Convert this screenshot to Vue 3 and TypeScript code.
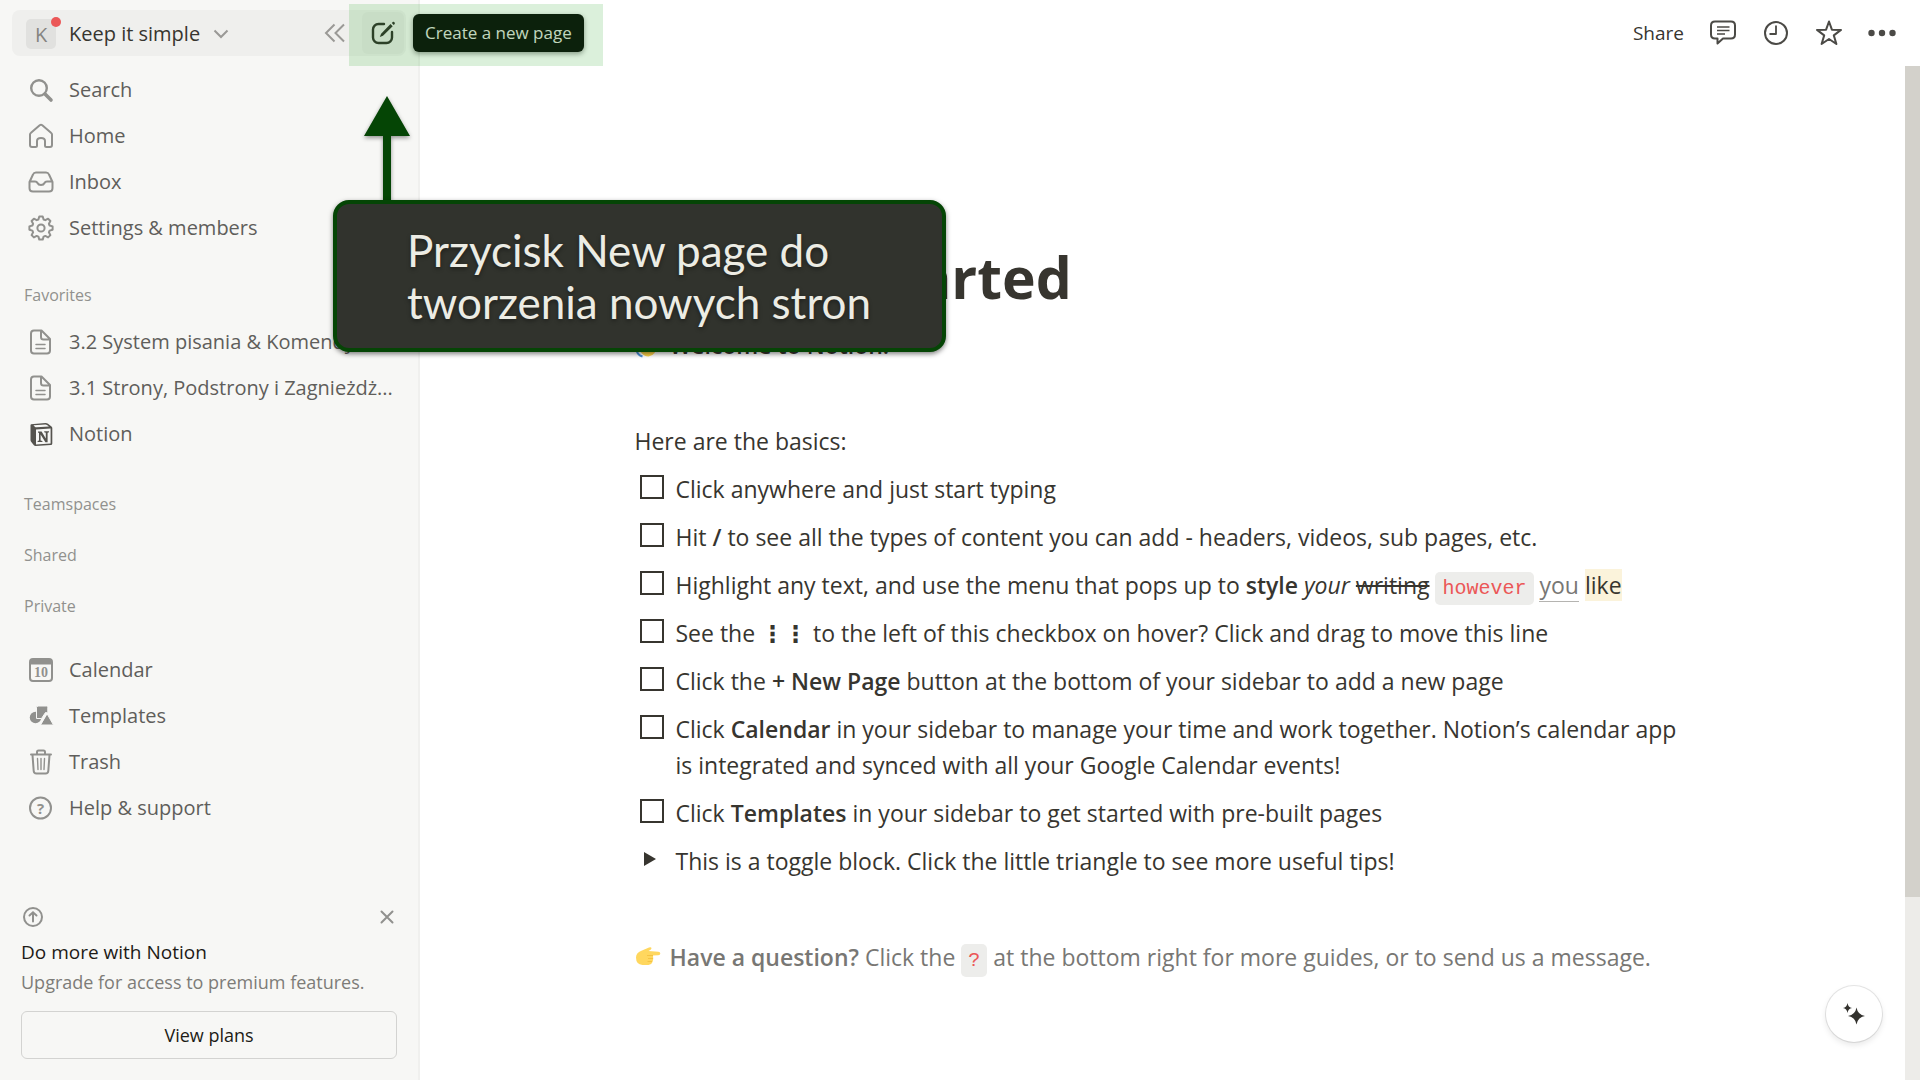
<script setup lang="ts">
import { ref } from 'vue'

interface NavItem {
  label: string
  icon: string
}

const mainNav: NavItem[] = [
  { label: 'Search', icon: 'search' },
  { label: 'Home', icon: 'home' },
  { label: 'Inbox', icon: 'inbox' },
  { label: 'Settings & members', icon: 'gear' },
]

const favorites: NavItem[] = [
  { label: '3.2 System pisania & Komendy', icon: 'page' },
  { label: '3.1 Strony, Podstrony i Zagnieżdż...', icon: 'page' },
  { label: 'Notion', icon: 'notion' },
]

const toolsNav: NavItem[] = [
  { label: 'Calendar', icon: 'calendar' },
  { label: 'Templates', icon: 'templates' },
  { label: 'Trash', icon: 'trash' },
  { label: 'Help & support', icon: 'help' },
]

const groups: { title: string; items: NavItem[]; kind: string }[] = [
  { title: '', items: mainNav, kind: 'primary' },
  { title: 'Favorites', items: favorites, kind: 'favorites' },
  { title: 'Teamspaces', items: [], kind: 'empty' },
  { title: 'Shared', items: [], kind: 'empty' },
  { title: 'Private', items: [], kind: 'empty' },
  { title: '', items: toolsNav, kind: 'tools' },
]

interface Span {
  text: string
  mark?: string
}

const todos: Span[][] = [
  [{ text: 'Click anywhere and just start typing' }],
  [
    { text: 'Hit ' },
    { text: '/', mark: 'bold' },
    { text: ' to see all the types of content you can add - headers, videos, sub pages, etc.' },
  ],
  [
    { text: 'Highlight any text, and use the menu that pops up to ' },
    { text: 'style', mark: 'bold' },
    { text: ' ' },
    { text: 'your', mark: 'italic' },
    { text: ' ' },
    { text: 'writing', mark: 'strike' },
    { text: ' ' },
    { text: 'however', mark: 'code' },
    { text: ' ' },
    { text: 'you', mark: 'link' },
    { text: ' ' },
    { text: 'like', mark: 'highlight' },
  ],
  [
    { text: 'See the ' },
    { text: '⋮⋮', mark: 'dots' },
    { text: ' to the left of this checkbox on hover? Click and drag to move this line' },
  ],
  [
    { text: 'Click the ' },
    { text: '+ New Page', mark: 'bold' },
    { text: ' button at the bottom of your sidebar to add a new page' },
  ],
  [
    { text: 'Click ' },
    { text: 'Calendar', mark: 'bold' },
    {
      text: ' in your sidebar to manage your time and work together. Notion’s calendar app is integrated and synced with all your Google Calendar events!',
    },
  ],
  [
    { text: 'Click ' },
    { text: 'Templates', mark: 'bold' },
    { text: ' in your sidebar to get started with pre-built pages' },
  ],
]

const done = ref<boolean[]>(todos.map(() => false))
</script>

<template>
  <div class="app">
    <aside class="sidebar">
      <header class="workspace">
        <button class="switcher" type="button">
          <span class="avatar">K<span class="dot"></span></span>
          <span>Keep it simple</span>
          <svg class="chevron" width="16" height="10" viewBox="0 0 16 10"><path d="M1.500 1.500 8 8l6.500-6.500" /></svg>
        </button>
        <button class="collapse" type="button" aria-label="Close sidebar">
          <svg width="22" height="20" viewBox="0 0 22 20"><path d="M10.500 1.500 2 10l8.500 8.500M20 1.500 11.500 10l8.500 8.500" /></svg>
        </button>
        <button class="compose" type="button" aria-label="New page">
          <svg width="26" height="26" viewBox="0 0 26 26">
            <path d="M14 4H8.500A5.500 5.500 0 0 0 3 9.500v8A5.500 5.500 0 0 0 8.500 23h8a5.500 5.500 0 0 0 5.500-5.500V12" fill="none" stroke="#35342f" stroke-width="2.400" stroke-linecap="round" />
            <path d="M20.500 4 22.700 6.200 13 15.800 9.800 17l1.300-3.300zM21.800 3l1-1c.900-.800 2.700.800 1.900 1.900l-1 1z" fill="#35342f" />
          </svg>
        </button>
      </header>

      <nav class="groups">
        <section v-for="(group, g) in groups" :key="g" :class="['group', group.kind]">
          <h2 v-if="group.title">{{ group.title }}</h2>
          <a v-for="item in group.items" :key="item.label" href="#" class="row">
            <svg class="icon" width="26" height="26" viewBox="0 0 26 26">
              <g v-if="item.icon === 'search'">
                <circle cx="11" cy="11" r="7.800" stroke-width="2.400" />
                <path d="m17 17 6 6" stroke-width="3.600" />
              </g>
              <g v-else-if="item.icon === 'home'">
                <path d="M2 11.600Q2 10.500 3 9.700L11.700 2.300q1.300-1 2.600 0L23 9.700q1 .800 1 1.900V22q0 2-2 2h-3.500q-1.500 0-1.500-1.500V18q0-3-4-3t-4 3v4.500Q9 24 7.500 24H4q-2 0-2-2z" />
              </g>
              <g v-else-if="item.icon === 'inbox'">
                <path d="M1.500 13 5 5.500Q5.800 3.500 8 3.500h10q2.200 0 3 2L24.500 13v6q0 3.500-3.500 3.500H5Q1.500 22.500 1.500 19zM2 12.500h5q1.800 0 2.500 1.500.900 2 3.500 2t3.500-2q.700-1.500 2.500-1.500h5" />
              </g>
              <g v-else-if="item.icon === 'gear'">
                <circle cx="13" cy="13" r="3.600" />
                <path d="M11.300 1.500h3.400l.900 3 1.700.700 2.800-1.500 2.300 2.300L20.900 8.800l.700 1.700 3 .900v3.300l-3 .900-.700 1.700 1.500 2.800-2.300 2.300-2.800-1.500-1.700.700-.900 3h-3.400l-.900-3-1.700-.700-2.800 1.500-2.300-2.300 1.500-2.800-.700-1.700-3-.900v-3.300l3-.900.700-1.700L3.600 6l2.300-2.300 2.800 1.500 1.700-.700z" />
              </g>
              <g v-else-if="item.icon === 'page'">
                <path d="M6 1.500h7.500L22 10v11.500q0 3-3 3H6q-3 0-3-3v-17q0-3 3-3zM13 2v6q0 2.500 2.500 2.500H22" />
                <path d="M8 15.500h9M8 19.500h9" stroke-width="1.500" />
              </g>
              <g v-else-if="item.icon === 'notion'">
                <path d="M3 3.200 17.500 2q1.500 0 2.500.800l3.500 2.700q.800.600.800 1.500v15.500q0 1.500-1.500 1.600L7.500 25q-1 0-1.600-.800L3.300 21q-.800-1-.800-2V4z" fill="#55534e" stroke="none" />
                <path d="m5.500 4.300 12-.800q.800 0 1.500.500l2 1.500L8.500 6.300q-1 0-1.700-.500zM8 8.500l14.600-.900v15L8 23.500z" fill="#f7f7f5" stroke="none" />
                <path d="M10 10.500h3.600l4.200 7v-5.700l-1.600-.500v-1h4.800v1l-1.400.500v9.400h-2.200l-4.800-7.800v6.200l1.800.500v1h-4.800v-1l1.400-.500v-7.700L10 11.500z" fill="#55534e" stroke="none" />
              </g>
              <g v-else-if="item.icon === 'calendar'">
                <rect x="2" y="2" width="22" height="22" rx="3" />
                <path d="M2 2h22v5.500H2z" class="solid" />
                <text x="13" y="20" text-anchor="middle" class="date">10</text>
              </g>
              <g v-else-if="item.icon === 'templates'" class="solid">
                <circle cx="7.500" cy="14.500" r="5.700" />
                <path d="M9.500 3h9q1.300 0 1.300 1.300v5.600L17.500 9.500l-4 6h-5V4.300Q8.500 3 9.500 3z" stroke="#f7f7f5" stroke-width="1" />
                <path d="M19.200 11 25.500 22H12.800z" stroke="#f7f7f5" stroke-width="1" />
              </g>
              <g v-else-if="item.icon === 'trash'">
                <path d="M3 5.500h20M9 5V3q0-1.500 1.500-1.500h5Q17 1.500 17 3v2M4.500 6l1.200 16q.200 2.500 2.700 2.500h9.200q2.500 0 2.700-2.500L21.500 6" />
                <path d="m9.500 9.500.500 11M13 9.500v11M16.500 9.500l-.500 11" stroke-width="1.400" />
              </g>
              <g v-else>
                <circle cx="12.500" cy="13" r="10.500" />
                <text x="12.500" y="18.500" text-anchor="middle" class="question">?</text>
              </g>
            </svg>
            <span class="label">{{ item.label }}</span>
          </a>
        </section>
      </nav>

      <section class="upgrade">
        <div class="upgrade-top">
          <svg width="22" height="22" viewBox="0 0 22 22"><circle cx="11" cy="11" r="9" /><path d="M11 15.500v-9M7.500 9.500 11 6.300l3.500 3.200" /></svg>
          <button class="dismiss" type="button" aria-label="Dismiss">
            <svg width="14" height="14" viewBox="0 0 14 14"><path d="m1.500 1.500 11 11m0-11-11 11" /></svg>
          </button>
        </div>
        <h3>Do more with Notion</h3>
        <p>Upgrade for access to premium features.</p>
        <button class="plans" type="button">View plans</button>
      </section>
    </aside>

    <main class="main">
      <header class="topbar">
        <button class="share" type="button">Share</button>
        <button type="button" aria-label="Comments">
          <svg width="28" height="28" viewBox="0 0 28 28"><path d="M6 2.500h16q4 0 4 4v9q0 4-4 4h-8l-5.500 5v-5H6q-4 0-4-4v-9q0-4 4-4z" /><path d="M8 8h12.500M8 11.500h12.500M8 15h8" stroke-width="1.600" /></svg>
        </button>
        <button type="button" aria-label="Updates">
          <svg width="28" height="28" viewBox="0 0 28 28"><circle cx="14" cy="14" r="11" /><path d="M14 6.500V15H7.500" stroke-width="1.800" /></svg>
        </button>
        <button type="button" aria-label="Favorite">
          <svg width="28" height="28" viewBox="0 0 28 28"><path d="m14 2.500 2.900 8.200 9.100.200-7.200 5.500 2.600 8.600-7.400-5-7.400 5 2.600-8.600L2 10.900l9.100-.200z" /></svg>
        </button>
        <button type="button" aria-label="More">
          <svg width="28" height="28" viewBox="0 0 28 28"><g class="more"><circle cx="3.500" cy="14" r="3.200" /><circle cx="14" cy="14" r="3.200" /><circle cx="24.500" cy="14" r="3.200" /></g></svg>
        </button>
      </header>

      <div class="scroller">
        <article class="page">
          <h1>Getting Started</h1>
          <p class="welcome">
            <svg class="emoji" width="26" height="26" viewBox="0 0 26 26">
              <path d="M6 4q2-2 4 1l4 5-1-6q0-2 2-2t2.500 2l3 9q1 5-1 8t-6 3.500q-4 0-6.500-3L2.500 16q-1-2 1-2.500L2 10q0-2 2-2Q4 5 6 4z" fill="#ffd54a" />
              <path d="M1.500 18q1 5 6 6.500M20 2q4 1 4.500 5" fill="none" stroke="#4a90d9" stroke-width="2" />
            </svg>
            <strong>Welcome to Notion!</strong>
          </p>
          <p class="basics">Here are the basics:</p>

          <ul class="todos">
            <li v-for="(todo, t) in todos" :key="t">
              <input :id="`todo-${t}`" v-model="done[t]" type="checkbox" />
              <label :for="`todo-${t}`"><template v-for="(span, s) in todo" :key="s"><a v-if="span.mark === 'link'" href="#" class="link">{{ span.text }}</a><span v-else :class="span.mark">{{ span.text }}</span></template></label>
            </li>
            <li>
              <button class="toggle" type="button" aria-label="Open toggle">
                <svg width="12" height="14" viewBox="0 0 12 14"><path d="M0 0 12 7 0 14z" fill="#37352f" /></svg>
              </button>
              <span>This is a toggle block. Click the little triangle to see more useful tips!</span>
            </li>
          </ul>

          <p class="question-line">
            <svg class="emoji" width="26" height="26" viewBox="0 0 26 26">
              <path d="M7 6.500 14 3.500q2.500-.700 2.500 1-.300 1-3 2.500l9.800.700q2 .300 2 1.800 0 1.700-2 1.700L18 11.500q.800 4.500-.500 6.500-.700 2.500-4 3H7.500Q1 20.500 1 13.500 1 8.500 7 6.500z" fill="#ffd75e" />
              <path d="M12 11.500h6M13 14.500h5M12.500 17.500h4.500" stroke="#f5c342" stroke-width="1" fill="none" />
            </svg>
            <strong>Have a question?</strong> Click the <span class="code">?</span> at the bottom right for more guides, or to send us a message.
          </p>
        </article>
        <div class="scrollbar"><div class="thumb"></div></div>
      </div>
    </main>

    <button class="assistant" type="button" aria-label="Ask AI">
      <svg width="24" height="24" viewBox="0 0 24 24"><path d="M14.500 5.500q1.200 7.200 8.500 8.500-7.300 1.300-8.500 8.500-1.200-7.200-8.500-8.500 7.300-1.300 8.500-8.500zM5.500 1q.700 4.300 4.500 5-3.800.700-4.500 5Q4.800 6.700 1 6q3.800-.700 4.500-5z" fill="#33322e" /></svg>
    </button>

    <div class="tooltip" role="tooltip">Create a new page</div>
    <div class="spotlight"></div>
    <svg class="arrow" width="46" height="106" viewBox="0 0 46 106"><path d="M23 0 46 40H27v66h-8V40H0z" fill="#054505" /></svg>
    <div class="callout">Przycisk New page do<br />tworzenia nowych stron</div>
  </div>
</template>

<style>
body {
  margin: 0;
  background: #fff;
}
</style>

<style scoped>
.app {
  position: relative;
  display: flex;
  min-height: 100vh;
  overflow: hidden;
  color: #37352f;
  font-family: "Open Sans", "Noto Sans", sans-serif;
  font-size: 23px;
  line-height: 36px;
}

.app * {
  box-sizing: border-box;
}

button {
  display: flex;
  align-items: center;
  padding: 0;
  border: 0;
  background: none;
  color: inherit;
  font: inherit;
  cursor: pointer;
}

a {
  color: inherit;
  text-decoration: none;
}

svg {
  flex: none;
}

h1,
h2,
h3,
p,
ul {
  margin: 0;
  padding: 0;
}

strong,
.bold {
  font-weight: 600;
}

.sidebar {
  display: flex;
  flex: none;
  flex-direction: column;
  width: 420px;
  padding: 10px 12px 21px;
  border-right: 2px solid #f0f0ee;
  background: #f7f7f5;
  color: #5f5e5b;
  font-size: 20px;
}

.workspace {
  display: flex;
  align-items: center;
  height: 46px;
  padding: 0 2px 0 14px;
  border-radius: 8px;
  background: #efefed;
}

.switcher {
  flex: 1;
  gap: 13px;
  padding-top: 2px;
  color: #37352f;
}

.avatar {
  position: relative;
  width: 30px;
  height: 30px;
  border-radius: 5px;
  background: #e1e1df;
  color: #85847f;
  line-height: 32px;
  text-align: center;
}

.dot {
  position: absolute;
  top: -2px;
  right: -5px;
  width: 10px;
  height: 10px;
  border-radius: 50%;
  background: #eb5757;
}

.chevron,
.collapse svg {
  fill: none;
  stroke: #9a9996;
  stroke-width: 2;
}

.collapse {
  margin-right: 16px;
}

.compose {
  justify-content: center;
  width: 42px;
  height: 42px;
  border-radius: 6px;
  background: #e9e9e7;
}

.groups {
  flex: 1;
}

.group h2 {
  padding-left: 12px;
  color: #91918e;
  font-size: 16px;
  font-weight: 400;
  line-height: 24px;
}

.group.primary {
  padding-top: 11px;
}

.group.favorites {
  padding: 32px 0 22px;
}

.group.favorites h2 {
  margin-bottom: 12px;
}

.group.empty {
  padding: 13px 0 14px;
}

.group.tools {
  padding-top: 15px;
}

.row {
  display: flex;
  align-items: center;
  gap: 15px;
  height: 46px;
  padding: 0 4px 0 16px;
}

.icon {
  fill: none;
  stroke: #91918e;
  stroke-width: 2;
  stroke-linecap: round;
  stroke-linejoin: round;
}

.solid {
  fill: #91918e;
  stroke: none;
}

.date,
.question {
  fill: #91918e;
  stroke: none;
  font-family: "Liberation Serif", serif;
  font-size: 14px;
  font-weight: 700;
}

.question {
  font-family: "Open Sans", sans-serif;
  font-size: 15px;
}

.label {
  white-space: nowrap;
}

.upgrade {
  padding: 0 9px;
  font-size: 18px;
  line-height: 30px;
}

.upgrade-top {
  display: flex;
  align-items: center;
  justify-content: space-between;
  height: 22px;
  margin-bottom: 9px;
  padding: 0 3px 0 1px;
}

.upgrade-top svg {
  fill: none;
  stroke: #91918e;
  stroke-width: 2;
  stroke-linecap: round;
}

.upgrade h3 {
  color: #1d1b16;
  font-size: 19px;
  font-weight: 400;
  line-height: 30px;
}

.upgrade p {
  color: #7d7c78;
  white-space: nowrap;
}

.plans {
  justify-content: center;
  width: 100%;
  height: 48px;
  margin-top: 14px;
  border: 1px solid #d3d3d1;
  border-radius: 6px;
  color: #1d1b16;
}

.main {
  display: flex;
  flex: 1;
  flex-direction: column;
  min-width: 0;
}

.topbar {
  display: flex;
  align-items: center;
  justify-content: flex-end;
  gap: 25px;
  height: 66px;
  padding-right: 24px;
  font-size: 19px;
}

.topbar svg {
  fill: none;
  stroke: #4b4a46;
  stroke-width: 2;
  stroke-linejoin: round;
}

.topbar .more {
  fill: #4b4a46;
  stroke: none;
}

.scroller {
  display: flex;
  flex: 1;
}

.page {
  flex: 1;
  max-width: 1056px;
  margin: 0 auto;
  padding: 175px 0 40px;
}

.page h1 {
  margin-bottom: 14px;
  font-size: 57px;
  font-weight: 700;
  line-height: 72px;
}

.welcome {
  display: flex;
  align-items: center;
}

.emoji {
  margin-right: 9px;
  vertical-align: -4px;
}

.basics {
  margin-top: 60px;
}

.todos {
  list-style: none;
}

.todos li {
  display: flex;
  align-items: flex-start;
  gap: 12px;
  margin-top: 12px;
}

.todos input {
  flex: none;
  width: 24px;
  height: 24px;
  margin: 4px 0 0 5px;
  border: 2px solid #37352f;
  background: #fff;
  appearance: none;
}

.todos input:checked {
  background: #2383e2;
}

.toggle {
  flex: none;
  width: 20px;
  height: 32px;
  margin-left: 9px;
}

.italic {
  font-style: italic;
}

.strike {
  text-decoration: line-through;
}

.code {
  padding: 5px 7px;
  border-radius: 5px;
  background: #ededeb;
  color: #eb5757;
  font-family: "Liberation Mono", monospace;
  font-size: 20px;
  line-height: 20px;
}

.link {
  border-bottom: 1px solid #b5b4b1;
  color: #787774;
}

.highlight {
  background: #fbf3db;
}

.dots {
  font-family: "DejaVu Sans", sans-serif;
  font-weight: 700;
  line-height: 20px;
}

.question-line {
  margin-top: 60px;
  color: #787774;
}

.scrollbar {
  flex: none;
  width: 15px;
  background: #edece9;
}

.thumb {
  height: 82%;
  background: #d3d1cb;
}

.assistant {
  position: absolute;
  right: 38px;
  bottom: 38px;
  justify-content: center;
  width: 56px;
  height: 56px;
  border-radius: 50%;
  background: #fff;
  box-shadow: 0 0 0 1px rgba(15, 15, 15, 0.1), 0 3px 6px rgba(15, 15, 15, 0.1);
}

.tooltip {
  position: absolute;
  top: 14px;
  left: 413px;
  padding: 0 12px;
  border-radius: 6px;
  background: #0f0f0f;
  box-shadow: 0 2px 5px rgba(15, 15, 15, 0.4);
  color: #e0e0de;
  font-size: 17px;
  line-height: 38px;
  white-space: nowrap;
}

.spotlight {
  position: absolute;
  top: 4px;
  left: 349px;
  width: 254px;
  height: 62px;
  background: rgba(0, 150, 0, 0.14);
  pointer-events: none;
}

.arrow {
  position: absolute;
  top: 96px;
  left: 364px;
  filter: drop-shadow(0 2px 2px rgba(0, 0, 0, 0.4));
}

.callout {
  position: absolute;
  top: 200px;
  left: 333px;
  width: 613px;
  padding: 20px 0 20px 70px;
  border: 4px solid #054505;
  border-radius: 16px;
  background: #31332d;
  box-shadow: 0 2px 5px rgba(0, 0, 0, 0.5);
  color: #ecece4;
  font-family: Lato, sans-serif;
  font-size: 44px;
  line-height: 52px;
  text-shadow: 0 2px 4px rgba(0, 0, 0, 0.4);
  white-space: nowrap;
}
</style>
